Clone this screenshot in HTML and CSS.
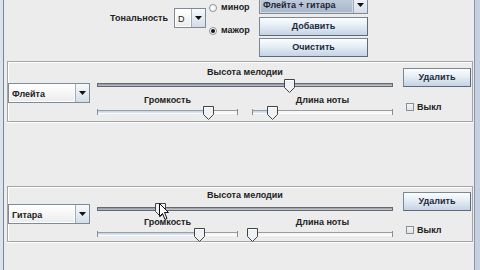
FILE: index.html
```html
<!DOCTYPE html>
<html>
<head>
<meta charset="utf-8">
<link rel="stylesheet" href="styles.css">
</head>
<body>
<div class="window">
  <div class="frame-left"></div>
  <div class="content">
    <div class="top">
      <span class="lbl tonal">Тональность</span>
      <div class="combo combo-d">
        <span class="combo-text">D</span>
        <span class="combo-arrow"><svg width="7" height="4" viewBox="0 0 7 4"><path d="M0 0H7L3.5 4Z" fill="#111"/></svg></span>
      </div>
      <div class="radios">
        <div class="radio r1"><span class="rdot"></span><span class="lbl">минор</span></div>
        <div class="radio r2"><span class="rdot on"></span><span class="lbl">мажор</span></div>
      </div>
      <div class="actions">
        <div class="combo combo-mix">
          <span class="combo-text">Флейта + гитара</span>
          <span class="combo-arrow"><svg width="7" height="4" viewBox="0 0 7 4"><path d="M0 0H7L3.5 4Z" fill="#111"/></svg></span>
        </div>
        <div class="btn b-add">Добавить</div>
        <div class="btn b-clear">Очистить</div>
      </div>
    </div>

    <div class="panel p1">
      <div class="combo combo-inst">
        <span class="combo-text">Флейта</span>
        <span class="combo-arrow"><svg width="7" height="4" viewBox="0 0 7 4"><path d="M0 0H7L3.5 4Z" fill="#111"/></svg></span>
      </div>
      <div class="sliders">
        <div class="lbl cap">Высота мелодии</div>
        <div class="slider dark" style="--v:65%">
          <div class="track"><div class="fill"></div></div>
          <svg class="thumb" width="11" height="14" viewBox="0 0 11 14"><path d="M0.5 0.5H10.5V8.5L5.5 13.5L0.5 8.5Z" fill="#eef2f6" stroke="#444"/><path d="M1.5 1.5H9.5" stroke="#fff"/></svg>
        </div>
        <div class="row2">
          <div class="sl-col">
            <div class="lbl cap">Громкость</div>
            <div class="slider light" style="--v:79%">
              <div class="track"><div class="fill"></div></div>
              <svg class="thumb" width="11" height="14" viewBox="0 0 11 14"><path d="M0.5 0.5H10.5V8.5L5.5 13.5L0.5 8.5Z" fill="#eef2f6" stroke="#444"/><path d="M1.5 1.5H9.5" stroke="#fff"/></svg>
            </div>
          </div>
          <div class="sl-col">
            <div class="lbl cap">Длина ноты</div>
            <div class="slider light" style="--v:14.5%">
              <div class="track"><div class="fill"></div></div>
              <svg class="thumb" width="11" height="14" viewBox="0 0 11 14"><path d="M0.5 0.5H10.5V8.5L5.5 13.5L0.5 8.5Z" fill="#eef2f6" stroke="#444"/><path d="M1.5 1.5H9.5" stroke="#fff"/></svg>
            </div>
          </div>
        </div>
      </div>
      <div class="side">
        <div class="btn del">Удалить</div>
        <div class="check"><span class="cbox"></span><span class="lbl">Выкл</span></div>
      </div>
    </div>

    <div class="gap"></div>

    <div class="panel p2">
      <div class="combo combo-inst">
        <span class="combo-text">Гитара</span>
        <span class="combo-arrow"><svg width="7" height="4" viewBox="0 0 7 4"><path d="M0 0H7L3.5 4Z" fill="#111"/></svg></span>
      </div>
      <div class="sliders">
        <div class="lbl cap">Высота мелодии</div>
        <div class="slider dark" style="--v:21.6%">
          <div class="track"><div class="fill"></div></div>
          <svg class="thumb" width="11" height="14" viewBox="0 0 11 14"><path d="M0.5 0.5H10.5V8.5L5.5 13.5L0.5 8.5Z" fill="#eef2f6" stroke="#444"/><path d="M1.5 1.5H9.5" stroke="#fff"/></svg>
        </div>
        <div class="row2">
          <div class="sl-col">
            <div class="lbl cap">Громкость</div>
            <div class="slider light" style="--v:73%">
              <div class="track"><div class="fill"></div></div>
              <svg class="thumb" width="11" height="14" viewBox="0 0 11 14"><path d="M0.5 0.5H10.5V8.5L5.5 13.5L0.5 8.5Z" fill="#eef2f6" stroke="#444"/><path d="M1.5 1.5H9.5" stroke="#fff"/></svg>
            </div>
          </div>
          <div class="sl-col">
            <div class="lbl cap">Длина ноты</div>
            <div class="slider light" style="--v:0%">
              <div class="track"><div class="fill"></div></div>
              <svg class="thumb" width="11" height="14" viewBox="0 0 11 14"><path d="M0.5 0.5H10.5V8.5L5.5 13.5L0.5 8.5Z" fill="#eef2f6" stroke="#444"/><path d="M1.5 1.5H9.5" stroke="#fff"/></svg>
            </div>
          </div>
        </div>
      </div>
      <div class="side">
        <div class="btn del">Удалить</div>
        <div class="check"><span class="cbox"></span><span class="lbl">Выкл</span></div>
      </div>
      <svg class="cursor" width="12" height="18" viewBox="0 0 12 18"><path d="M0.5 0.5V13.5L3.5 10.5L6 16.5L8 15.5L5.5 9.5H9.5Z" fill="#fff" stroke="#111" stroke-linejoin="round"/></svg>
    </div>
  </div>
  <div class="frame-right"></div>
</div>
</body>
</html>
```

FILE: styles.css
```css
* { box-sizing: border-box; }
html, body { margin: 0; padding: 0; }
body {
  width: 480px;
  height: 270px;
  overflow: hidden;
  background: #ececec;
  font-family: "Liberation Sans", Arial, sans-serif;
  font-weight: bold;
  font-size: 9px;
  color: #222;
}
.window { display: flex; width: 480px; height: 270px; }
.frame-left { width: 4px; background: linear-gradient(to right, #dde3ea 0 3px, #77879b 3px 4px); }
.frame-right { width: 6px; background: linear-gradient(to right, #8795a8 0 1px, #c3d1e3 1px); }
.content { flex: 1; display: flex; flex-direction: column; background: #ececec; }

.lbl { line-height: 11px; white-space: nowrap; }

/* top area */
.top { display: flex; align-items: flex-start; height: 61px; }
.tonal { width: 64px; margin-left: 100px; margin-top: 13px; text-align: right; }

.combo { display: flex; height: 20px; border: 1px solid #7d8b99; }
.combo-text {
  flex: 1;
  padding-left: 2px;
  line-height: 18px;
  background: linear-gradient(#ffffff, #ececec);
  border: 1px solid #fff;
  overflow: hidden;
  white-space: nowrap;
}
.combo-arrow {
  width: 14px;
  border-left: 1px solid #a3adb8;
  background: linear-gradient(#f7f9fc, #d4dde8);
  display: flex;
  align-items: center;
  justify-content: center;
}
.combo-d { width: 32px; margin-left: 6px; margin-top: 8px; }
.combo-d .combo-text { font-weight: normal; }

.radios { width: 50px; margin-left: 3px; display: flex; flex-direction: column; }
.radio { display: flex; align-items: center; height: 11px; }
.r1 { margin-top: 2px; }
.r2 { margin-top: 12px; }
.rdot {
  width: 8px; height: 8px; border-radius: 50%;
  border: 1px solid #8a8f96;
  background: #fafafa;
  margin-right: 4px;
  display: flex; align-items: center; justify-content: center;
}
.rdot.on::after { content: ""; width: 4px; height: 4px; border-radius: 50%; background: #111; }

.actions { width: 109px; display: flex; flex-direction: column; }
.combo-mix { height: 19px; margin-top: -5px; }
.combo-mix .combo-text { background: linear-gradient(#c4cfdd, #a9b7c9); border-color: #d0d9e4; line-height: 17px; color: #1c2638; }

.btn {
  height: 19px;
  border: 1px solid #7a8896;
  border-right-color: #5d6a77;
  border-bottom-color: #5d6a77;
  background: linear-gradient(#fbfdff, #e5edf5 45%, #c4d3e4);
  text-align: center;
  line-height: 17px;
  color: #1c2a3a;
  white-space: nowrap;
}
.b-add { margin-top: 3px; }
.b-clear { margin-top: 2px; }

/* panels */
.panel {
  position: relative;
  display: flex;
  align-items: flex-start;
  margin-left: 3px;
  margin-right: 1px;
  border: 1px solid #a4a4a4;
  box-shadow: inset 1px 1px 0 #fff, 0 1px 0 #fff;
}
.p1 { height: 61px; }
.p2 { height: 56px; }
.gap { height: 64px; }

.combo-inst { width: 82px; }
.p1 .combo-inst { margin-top: 21px; }
.p2 .combo-inst { margin-top: 17px; }

.sliders { width: 296px; margin-left: 7px; display: flex; flex-direction: column; }
.cap { text-align: center; }
.p1 .sliders { padding-top: 5px; }
.p1 .sliders > .slider { margin-top: 1px; }
.p1 .row2 { margin-top: 2px; }
.p2 .sliders { padding-top: 3px; }
.p2 .sliders > .slider { margin-top: 2px; }

.row2 { display: flex; gap: 14px; }
.sl-col { width: 141px; display: flex; flex-direction: column; }

.slider { position: relative; height: 14px; }
.track { position: relative; margin-top: 4px; height: 4px; }
.fill { height: 100%; width: var(--v); }
.thumb { position: absolute; top: 0; left: calc(var(--v) - 5.5px); z-index: 2; }

.dark .track { border: 1px solid #646a72; background: linear-gradient(#9a9ea4, #c9ccd0); }
.dark .fill { background: linear-gradient(#8c95a0, #b7c0ca); }

.light .track { border-top: 1px solid #9c9c9c; border-bottom: 1px solid #fefefe; background: #f6f6f6; }
.light .fill { background: linear-gradient(#c2d4e8, #dbe6f2); }
.light .track::before, .light .track::after {
  content: ""; position: absolute; top: -2px; width: 1px; height: 6px; background: #8d8d8d;
}
.light .track::before { left: 0; }
.light .track::after { right: 0; }

.side { width: 68px; margin-left: 10px; display: flex; flex-direction: column; }
.p1 .side { margin-top: 6px; }
.p2 .side { margin-top: 5px; }
.check { display: flex; align-items: center; height: 10px; padding-left: 3px; }
.p1 .check { margin-top: 15px; }
.p2 .check { margin-top: 14px; }
.cbox {
  width: 8px; height: 8px;
  border: 1px solid #8b8f95;
  background: linear-gradient(#f2f4f6, #dfe3e8);
  margin-right: 3px;
}

.cursor { position: absolute; left: 151px; top: 16px; z-index: 5; }
```
